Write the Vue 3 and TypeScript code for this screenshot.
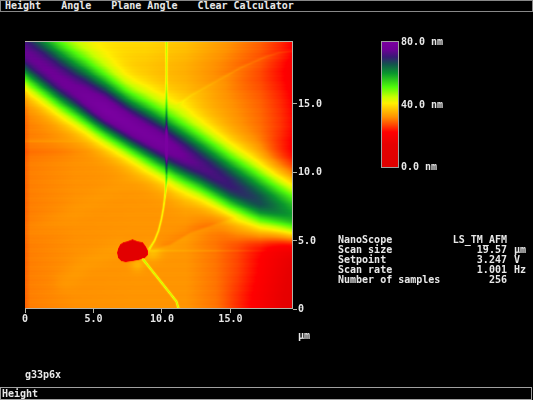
<script setup lang="ts">
import { onMounted, ref } from 'vue'

type Point = [number, number]
type Stop = [number, number, number, number]

const menu = ['Height', 'Angle', 'Plane Angle', 'Clear Calculator']
const scanSize = 19.57
const yTicks = [
  { label: '15.0', span: scanSize - 15 },
  { label: '10.0', span: 5 },
  { label: '5.0', span: 5 },
  { label: '0', span: 5 },
]
const xTicks = [
  { label: '0', span: 5 },
  { label: '5.0', span: 5 },
  { label: '10.0', span: 5 },
  { label: '15.0', span: scanSize - 15 },
]
const readings = [
  { name: 'NanoScope', value: 'LS_TM_AFM', unit: '' },
  { name: 'Scan size', value: '19.57', unit: 'µm' },
  { name: 'Setpoint', value: '3.247', unit: 'V' },
  { name: 'Scan rate', value: '1.001', unit: 'Hz' },
  { name: 'Number of samples', value: '256', unit: '' },
]
const tracks = (ticks: { span: number }[]) => ticks.map((t) => `${t.span}fr`).join(' ')

// Height (0..1 of full scale) to colour, shared by the image and the scale bar
const stops: Stop[] = [
  [0, 222, 0, 0],
  [0.18, 230, 0, 0],
  [0.28, 255, 0, 0],
  [0.34, 255, 75, 0],
  [0.4, 255, 145, 0],
  [0.46, 255, 195, 0],
  [0.51, 255, 240, 0],
  [0.56, 200, 255, 0],
  [0.64, 80, 250, 10],
  [0.75, 10, 150, 45],
  [0.82, 18, 85, 75],
  [0.88, 55, 25, 115],
  [0.94, 110, 0, 150],
  [1, 122, 0, 160],
]
const barStyle = {
  backgroundImage: `linear-gradient(to top, ${stops
    .map(([t, r, g, b]) => `rgb(${r} ${g} ${b}) ${t * 100}%`)
    .join(', ')})`,
}

function colour(t: number): number[] {
  const v = Math.min(1, Math.max(0, t))
  let i = 1
  while (i < stops.length - 1 && stops[i][0] < v) i++
  const a = stops[i - 1]
  const b = stops[i]
  const k = (v - a[0]) / (b[0] - a[0])
  return [1, 2, 3].map((c) => a[c] + (b[c] - a[c]) * k)
}

function interp(table: Point[], x: number): number {
  if (x <= table[0][0]) return table[0][1]
  for (let i = 1; i < table.length; i++) {
    const [x1, y1] = table[i]
    if (x <= x1) {
      const [x0, y0] = table[i - 1]
      return y0 + ((y1 - y0) * (x - x0)) / (x1 - x0)
    }
  }
  return table[table.length - 1][1]
}

function distance(path: Point[], x: number, y: number): number {
  let best = Infinity
  for (let i = 1; i < path.length; i++) {
    const [ax, ay] = path[i - 1]
    const dx = path[i][0] - ax
    const dy = path[i][1] - ay
    const k = Math.min(1, Math.max(0, ((x - ax) * dx + (y - ay) * dy) / (dx * dx + dy * dy)))
    best = Math.min(best, Math.hypot(x - ax - k * dx, y - ay - k * dy))
  }
  return best
}

function inside(path: Point[], x: number, y: number): boolean {
  let hit = false
  for (let i = 1; i < path.length; i++) {
    const [ax, ay] = path[i - 1]
    const [bx, by] = path[i]
    if (ay > y !== by > y && x < ((bx - ax) * (y - ay)) / (by - ay) + ax) hit = !hit
  }
  return hit
}

const bump = (d: number, w: number) => Math.exp(-(d * d) / (w * w))
const step = (a: number, b: number, x: number) => {
  const k = Math.min(1, Math.max(0, (x - a) / (b - a)))
  return k * k * (3 - 2 * k)
}

const SIZE = 267
const ridge: Point[] = [[0, 11], [35, 38], [70, 62], [107, 85], [140, 103], [175, 124], [205, 143], [235, 160], [267, 173]]
const crest: Point[] = [[0, 0.93], [50, 0.95], [80, 1], [135, 0.98], [175, 0.91], [205, 0.88], [235, 0.83], [255, 0.77], [267, 0.74]]
const upperWidth: Point[] = [[0, 36], [30, 36], [60, 35], [100, 31], [137, 31], [175, 33], [205, 34], [235, 36], [267, 38]]
const lowerWidth: Point[] = [[0, 31], [60, 28], [107, 27], [150, 29], [205, 27], [267, 24]]
const upperGround: Point[] = [[0, 0.5], [120, 0.49], [160, 0.465], [200, 0.415], [235, 0.365], [255, 0.32], [267, 0.285]]
const lowerGround: Point[] = [[0, 0.36], [5, 0.385], [50, 0.4], [110, 0.405], [160, 0.405], [190, 0.375], [212, 0.335], [235, 0.275], [267, 0.17]]
const tail: Point[] = [[141, 135], [140, 150], [138, 166], [136, 177], [133, 189], [129, 199], [124, 207]]
const thread: Point[] = [[117, 217], [140, 246], [151, 260], [153, 267]]
const upperCrease: Point[] = [[153, 62], [165, 53], [190, 39], [215, 25], [240, 14], [253, 10], [267, 8]]
const lowerCrease: Point[] = [[128, 208], [145, 203], [165, 191], [185, 184], [212, 175]]
const leftCrease: Point[] = [[40, 240], [60, 222], [92, 207]]
const farCrease: Point[] = [[0, 190], [40, 176], [90, 145], [135, 120]]
const particle: Point[] = [
  [92, 211], [93, 207], [95, 203], [98, 201], [102, 200], [107, 198], [112, 200], [117, 201],
  [120, 205], [122, 209], [122, 213], [119, 216], [113, 218], [107, 219], [100, 220], [96, 219],
  [93, 216], [92, 211],
]

function heightAt(x: number, y: number): number {
  const offset = y - interp(ridge, x)
  const side = step(-15, 15, offset)
  let upper = interp(upperGround, x)
  upper -= 0.03 * step(60, 120, x) * bump(y - 30, 25)
  upper -= 0.04 * step(225, 258, x) * step(80, 115, y)
  let lower = interp(lowerGround, x)
  lower += 0.06 * step(185, 230, x) * (1 - step(188, 208, y))
  lower -= 0.02 * step(190, 215, x) * step(220, 267, y)
  lower -= 0.012 * bump(y - 110, 6) * (1 - step(20, 110, x))
  lower += 0.015 * bump(y - 99, 1.4) * (1 - step(30, 75, x))
  let h = upper * (1 - side) + lower * side

  const width = interp(offset < 0 ? upperWidth : lowerWidth, x)
  const relief = bump(offset, width)
  h += (interp(crest, x) - h) * relief

  const open = 1 - relief
  h += 0.012 * step(-1, 1, y - interp(upperCrease, x)) * bump(distance(upperCrease, x, y), 12) * open
  h += 0.014 * bump(distance(upperCrease, x, y), 1.5) * open
  const below = -0.014 + 0.024 * step(-2, 2, y - interp(lowerCrease, x))
  h += below * bump(distance(lowerCrease, x, y), 9) * open
  h += 0.01 * bump(distance(leftCrease, x, y), 10) * open
  h += 0.006 * bump(distance(farCrease, x, y), 10) * open * side
  if (x > 122) h += 0.02 * bump(y - 209, 1) * (1 - step(215, 255, x) * 0.6)

  // Filament crossing the ridge, then bending down to the particle
  h += 0.1 * bump(x - 141, 1.2) * (1 - step(130, 142, y))
  h += 0.11 * step(130, 142, y) * bump(distance(tail, x, y), 1.1)
  h += 0.15 * bump(distance(thread, x, y), 1.2)
  h += 0.04 * bump(Math.hypot(x - 127, y - 210), 9)
  h += 0.035 * bump(Math.hypot(x - 112, y - 223), 7)

  const edge = distance(particle, x, y)
  const cover = inside(particle, x, y) ? step(-1, 0.8, edge) : 1 - step(-1, 1, edge)
  h += (0.1 - h) * cover

  return h + 0.0015 * Math.sin(y * 2.1) + 0.0015 * Math.sin(y * 0.73 + x * 0.01)
}

const scan = ref<HTMLCanvasElement | null>(null)

onMounted(() => {
  const ctx = scan.value?.getContext('2d')
  if (!ctx) return
  const image = ctx.createImageData(SIZE, SIZE)
  for (let y = 0; y < SIZE; y++) {
    for (let x = 0; x < SIZE; x++) {
      const [r, g, b] = colour(heightAt(x, y))
      image.data.set([r, g, b, 255], (y * SIZE + x) * 4)
    }
  }
  ctx.putImageData(image, 0, 0)
})
</script>

<template>
  <div class="screen">
    <nav class="menu">
      <button v-for="item in menu" :key="item" type="button">{{ item }}</button>
    </nav>

    <main>
      <section class="plot">
        <canvas ref="scan" class="scan" :width="SIZE" :height="SIZE"></canvas>
        <div class="y-axis" :style="{ gridTemplateRows: tracks(yTicks) }">
          <span v-for="t in yTicks" :key="t.label" class="y-tick">{{ t.label }}</span>
        </div>
        <div class="x-axis" :style="{ gridTemplateColumns: tracks(xTicks) }">
          <span v-for="t in xTicks" :key="t.label" class="x-tick">{{ t.label }}</span>
        </div>
        <span class="axis-unit">µm</span>
      </section>

      <aside>
        <div class="scale">
          <div class="bar" :style="barStyle"></div>
          <div class="scale-labels">
            <span>80.0 nm</span>
            <span>40.0 nm</span>
            <span>0.0 nm</span>
          </div>
        </div>
        <table>
          <tbody>
            <tr v-for="r in readings" :key="r.name">
              <th scope="row">{{ r.name }}</th>
              <td class="value">{{ r.value }}</td>
              <td class="unit">{{ r.unit }}</td>
            </tr>
          </tbody>
        </table>
      </aside>
    </main>

    <p class="file">g33p6x</p>
    <footer>Height</footer>
  </div>
</template>

<style>
body {
  margin: 0;
  background: #000;
}
</style>

<style scoped>
.screen {
  box-sizing: border-box;
  min-height: 100vh;
  display: flex;
  flex-direction: column;
  background: #000;
  color: #e8e8e8;
  font: bold 10px/10px "DejaVu Sans Mono", "Liberation Mono", monospace;
  white-space: nowrap;
}
.menu {
  display: flex;
  gap: 20px;
  padding: 0 4px;
  border: 1px solid #888;
}
.menu button {
  padding: 0;
  border: 0;
  background: none;
  color: inherit;
  font: inherit;
}
main {
  display: flex;
  align-items: flex-start;
  padding: 29px 0 0 25px;
}
.plot {
  flex: 0 1 308px;
  display: grid;
  grid-template-columns: 1fr 40px;
}
.scan {
  display: block;
  box-sizing: border-box;
  width: 100%;
  aspect-ratio: 1;
  border: solid #b4b4a8;
  border-width: 1px 1px 1px 0;
}
.y-axis,
.x-axis {
  display: grid;
  align-items: start;
}
.y-axis .y-tick {
  align-self: end;
  display: flex;
  align-items: center;
  gap: 1px;
  margin-bottom: -5px;
}
.y-tick::before {
  content: "";
  width: 4px;
  height: 1px;
  background: #b4b4a8;
}
.x-tick {
  display: flex;
  flex-direction: column;
  align-items: center;
  gap: 1px;
  width: 0;
}
.x-tick::before {
  content: "";
  width: 1px;
  height: 4px;
  background: #b4b4a8;
}
.axis-unit {
  grid-column: 2;
  padding: 22px 0 0 5px;
}
aside {
  flex: 1;
  display: flex;
  flex-direction: column;
  gap: 67px;
  padding-left: 5px;
}
.scale {
  display: flex;
  gap: 2px;
  padding-left: 43px;
}
.bar {
  box-sizing: border-box;
  width: 18px;
  height: 127px;
  border: 1px solid #a0a0a0;
}
.scale-labels {
  display: flex;
  flex-direction: column;
  justify-content: space-between;
  margin: -4px 0;
}
table {
  width: 188px;
  border-collapse: collapse;
}
th,
td {
  padding: 0;
  font: inherit;
  text-align: left;
}
td.value {
  text-align: right;
}
td.unit {
  width: 12px;
  padding-left: 7px;
}
.file {
  margin: auto 0 7px;
  padding: 0 25px;
}
footer {
  margin-right: 1px;
  padding: 0 1px;
  border: 1px solid #a0a0a0;
  line-height: 11px;
}
</style>
